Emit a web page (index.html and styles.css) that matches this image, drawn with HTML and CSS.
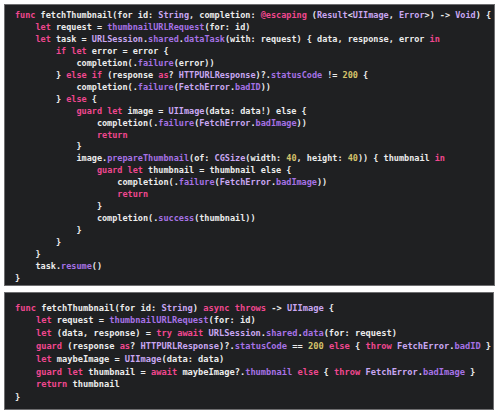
FILE: index.html
```html
<!DOCTYPE html>
<html>
<head>
<meta charset="utf-8">
<link rel="stylesheet" href="styles.css">
</head>
<body>
<div class="page">
<pre class="code code-old"><span class="k">func</span> fetchThumbnail(for id: <span class="t">String</span>, completion: <span class="k">@escaping</span> (<span class="t">Result</span>&lt;<span class="t">UIImage</span>, <span class="t">Error</span>&gt;) -&gt; <span class="t">Void</span>) {
    <span class="k">let</span> request = <span class="f">thumbnailURLRequest</span>(for: id)
    <span class="k">let</span> task = <span class="t">URLSession</span>.<span class="f">shared</span>.<span class="f">dataTask</span>(with: request) { data, response, error <span class="k">in</span>
        <span class="k">if let</span> error = error {
            completion(.<span class="f">failure</span>(error))
        } <span class="k">else if</span> (response <span class="k">as</span>? <span class="t">HTTPURLResponse</span>)?.<span class="f">statusCode</span> != <span class="n">200</span> {
            completion(.<span class="f">failure</span>(<span class="t">FetchError</span>.<span class="f">badID</span>))
        } <span class="k">else</span> {
            <span class="k">guard let</span> image = <span class="t">UIImage</span>(data: data!) else {
                completion(.<span class="f">failure</span>(<span class="t">FetchError</span>.<span class="f">badImage</span>))
                <span class="k">return</span>
            }
            image.<span class="f">prepareThumbnail</span>(of: <span class="t">CGSize</span>(width: <span class="n">40</span>, height: <span class="n">40</span>)) { thumbnail <span class="k">in</span>
                <span class="k">guard let</span> thumbnail = thumbnail else {
                    completion(.<span class="f">failure</span>(<span class="t">FetchError</span>.<span class="f">badImage</span>))
                    <span class="k">return</span>
                }
                completion(.<span class="f">success</span>(thumbnail))
            }
        }
    }
    task.<span class="f">resume</span>()
}</pre>
<pre class="code code-new"><span class="k">func</span> fetchThumbnail(for id: <span class="t">String</span>) <span class="k">async throws</span> -&gt; <span class="t">UIImage</span> {
    <span class="k">let</span> request = <span class="f">thumbnailURLRequest</span>(for: id)
    <span class="k">let</span> (data, response) = <span class="k">try await</span> <span class="t">URLSession</span>.<span class="f">shared</span>.<span class="f">data</span>(for: request)
    <span class="k">guard</span> (response <span class="k">as</span>? <span class="t">HTTPURLResponse</span>)?.<span class="f">statusCode</span> == <span class="n">200</span> <span class="k">else</span> { <span class="k">throw</span> <span class="t">FetchError</span>.<span class="f">badID</span> }
    <span class="k">let</span> maybeImage = <span class="t">UIImage</span>(data: data)
    <span class="k">guard let</span> thumbnail = <span class="k">await</span> maybeImage?.<span class="f">thumbnail</span> <span class="k">else</span> { <span class="k">throw</span> <span class="t">FetchError</span>.<span class="f">badImage</span> }
    <span class="k">return</span> thumbnail
}</pre>
</div>
</body>
</html>
```

FILE: styles.css
```css
html, body {
  margin: 0;
  padding: 0;
  background: #ffffff;
}

.page {
  padding: 4px 5px 0 4px;
  display: flex;
  flex-direction: column;
  gap: 6px;
}

.code {
  margin: 0;
  background: #1f2022;
  border: 1px solid #6e6e70;
  color: #ececec;
  font-family: "DejaVu Sans Mono", "Liberation Mono", monospace;
  font-weight: bold;
  white-space: pre;
  overflow: hidden;
  padding-left: 10px;
}

.code-old {
  font-size: 8.5px;
  line-height: 11.95px;
  padding-top: 5px;
  padding-bottom: 0;
  height: 275px;
}

.code-new {
  font-size: 8.7px;
  line-height: 12.8px;
  padding-top: 8.6px;
  padding-bottom: 5px;
  margin-right: 1px;
}

.k { color: #f0478f; }
.t { color: #c9a7f2; }
.f { color: #a672e6; }
.n { color: #d6c36a; }
```
